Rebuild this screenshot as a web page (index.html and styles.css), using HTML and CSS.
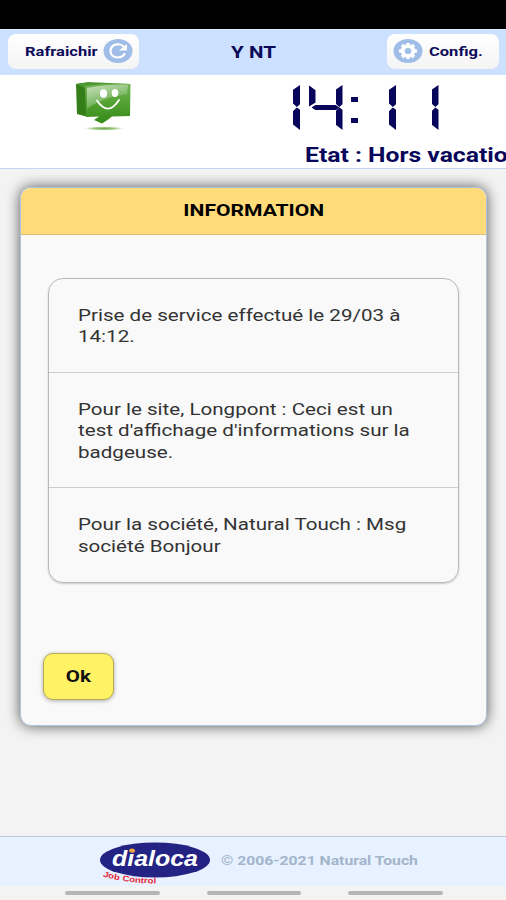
FILE: index.html
```html
<!DOCTYPE html>
<html lang="fr">
<head>
<meta charset="utf-8">
<title>Badgeuse</title>
<link rel="stylesheet" href="styles.css">
</head>
<body>
<div class="screen">
  <div class="statusbar"></div>
  <header class="topbar">
    <button class="tool tool-refresh"><span class="wide">Rafraichir</span>
      <svg width="30" height="26" viewBox="0 0 30 26"><ellipse cx="15" cy="13" rx="14.5" ry="12" fill="#9fbde6"/><path d="M21 8.800C19 6.800 16.800 6 14.200 6.300 9.800 6.800 7.500 9.500 7.500 13c0 3.800 3 6.500 7.200 6.500 3.600 0 6-1.700 7.200-4.200" fill="none" stroke="#fff" stroke-width="2.200"/><path d="M24 6v6.500h-8z" fill="#fff"/></svg>
    </button>
    <h1 class="title"><span class="wide">Y NT</span></h1>
    <button class="tool tool-config">
      <svg width="30" height="26" viewBox="0 0 30 26"><ellipse cx="15" cy="13" rx="14.500" ry="12" fill="#9fbde6"/><g fill="#fff"><ellipse cx="15" cy="13" rx="7.300" ry="6.200"/><rect x="13" y="5" width="4" height="16" rx="1"/><rect x="6" y="11.300" width="18" height="3.400" rx="1"/><rect x="13" y="4.500" width="4" height="17" rx="1" transform="rotate(45 15 13)"/><rect x="13" y="4.500" width="4" height="17" rx="1" transform="rotate(-45 15 13)"/></g><ellipse cx="15" cy="13" rx="3.400" ry="2.900" fill="#9fbde6"/></svg>
      <span class="wide">Config.</span>
    </button>
  </header>
  <section class="status">
    <svg class="smiley" width="60" height="52" viewBox="0 0 60 52">
      <defs>
        <linearGradient id="face" x1="0" y1="0" x2="0" y2="1"><stop offset="0" stop-color="#75b45a"/><stop offset=".45" stop-color="#55a335"/><stop offset="1" stop-color="#348a18"/></linearGradient>
        <linearGradient id="shine" x1="0" y1="0" x2=".7" y2="1"><stop offset="0" stop-color="#fff" stop-opacity=".6"/><stop offset="1" stop-color="#fff" stop-opacity="0"/></linearGradient>
        <radialGradient id="ground"><stop offset="0" stop-color="#6fa84d"/><stop offset=".55" stop-color="#a9cf91"/><stop offset="1" stop-color="#fff" stop-opacity="0"/></radialGradient>
      </defs>
      <ellipse cx="29" cy="48.500" rx="22" ry="2.300" fill="url(#ground)"/>
      <path d="M1 4 10 3 13 37 2 34z" fill="#347e19"/>
      <path d="M1 4 13 2 55 4 10 8z" fill="#4d9732"/>
      <path d="M10 6Q34 3 55.500 4L55 36 37 36.500Q33 40 27 43.500L19 40 24 36.500 11 37z" fill="url(#face)"/>
      <path d="M12 8Q34 4 53 5L52 14Q28 17 12 29z" fill="url(#shine)"/>
      <ellipse cx="28.500" cy="13.500" rx="3.600" ry="4.300" fill="#fff"/><ellipse cx="40" cy="13" rx="3.300" ry="4" fill="#fff"/>
      <path d="M22 20.500Q33 37 44 20" fill="none" stroke="#fff" stroke-width="1.800" stroke-linecap="round"/>
    </svg>
    <div class="readout">
      <div class="clock" role="img" aria-label="14:11">
        <div class="digit"><i class="seg top-right"></i><i class="seg low-right"></i></div>
        <div class="digit"><i class="seg top-left"></i><i class="seg middle"></i><i class="seg top-right"></i><i class="seg low-right"></i></div>
        <div class="colon"><i></i><i></i></div>
        <div class="digit"><i class="seg top-right"></i><i class="seg low-right"></i></div>
        <div class="digit"><i class="seg top-right"></i><i class="seg low-right"></i></div>
      </div>
      <p class="state"><span class="wide">Etat : Hors vacation</span></p>
    </div>
  </section>
  <main>
    <section class="card">
      <h2><span class="wide">INFORMATION</span></h2>
      <div class="card-body">
        <ul class="messages">
          <li><span class="wide">Prise de service effectué le 29/03 à<br>14:12.</span></li>
          <li><span class="wide">Pour le site, Longpont : Ceci est un<br>test d'affichage d'informations sur la<br>badgeuse.</span></li>
          <li><span class="wide">Pour la société, Natural Touch : Msg<br>société Bonjour</span></li>
        </ul>
        <button class="ok"><span class="wide">Ok</span></button>
      </div>
    </section>
  </main>
  <footer>
    <svg class="logo" width="112" height="46" viewBox="0 0 112 46">
      <ellipse cx="56" cy="19" rx="55" ry="17.500" fill="#232383"/>
      <text x="13" y="25" class="brand" textLength="86" lengthAdjust="spacingAndGlyphs">dialoca</text>
      <ellipse cx="33" cy="9.500" rx="2.800" ry="2" fill="#f0a43a"/>
      <path id="swoosh" d="M4 35.500Q28 42.500 59 42.500" fill="none"/>
      <text class="tagline"><textPath href="#swoosh" textLength="54" lengthAdjust="spacingAndGlyphs">Job Control</textPath></text>
    </svg>
    <span class="wide copyright">© 2006-2021 Natural Touch</span>
  </footer>
  <div class="navbar"><i></i><i></i><i></i></div>
</div>
</body>
</html>
```

FILE: styles.css
```css
* { box-sizing: border-box; }
body { margin: 0; font-family: Roboto, "Liberation Sans", sans-serif; background: #f3f3f3; }
h1, h2, p, ul { margin: 0; padding: 0; }
.screen { width: 506px; height: 900px; overflow: hidden; display: flex; flex-direction: column; }
.wide { display: inline-block; transform: scaleX(1.21); transform-origin: left center; white-space: nowrap; }
.statusbar { height: 29px; background: #000; flex: none; }
.topbar { height: 46px; flex: none; background: #cce0ff; border-top: 1px solid #dbe8fd; display: grid; grid-template-columns: 131px 1fr 112px; align-items: center; padding: 0 7px 3px 8px; color: #0c0a58; }
.tool { height: 35px; border: 0; border-radius: 8px; background: linear-gradient(#fff, #f4f4f4); display: flex; align-items: center; font: bold 13px Roboto, sans-serif; color: #0c0a58; padding: 0; }
.tool .wide { transform: scaleX(1.27); }
.tool-refresh { justify-content: space-between; padding: 0 6px 0 17px; }
.tool-config { gap: 6px; padding-left: 6px; }
.title { font-size: 17px; line-height: 20px; text-align: center; padding: 1px 18px 0 0; }
.title .wide { transform-origin: center; }
.status { height: 94px; flex: none; background: #fff; border-bottom: 1px solid #c3d5ee; display: flex; padding-left: 75px; }
.smiley { margin-top: 5px; flex: none; }
.readout { padding: 10px 0 0 131px; }
.clock { display: flex; gap: 8.500px; height: 46px; }
.digit { width: 34px; height: 45px; display: grid; grid-template-columns: 7px 20px 7px; grid-template-rows: 22px 23px; flex: none; }
.seg { background: #08065a; }
.top-right { grid-column: 3; grid-row: 1; clip-path: polygon(100% 0, 100% 87%, 55% 100%, 0 84%, 0 22%); }
.low-right { grid-column: 3; grid-row: 2; clip-path: polygon(55% 2%, 100% 12%, 100% 100%, 0 76%, 0 18%); }
.top-left { grid-column: 1; grid-row: 1; clip-path: polygon(0 0, 100% 24%, 100% 80%, 8% 98%, 0 98%); }
.middle { grid-column: 1 / 4; grid-row: 1 / 3; align-self: start; height: 5px; margin: 20px 3px 0 3px; clip-path: polygon(0 50%, 14% 0, 86% 0, 100% 50%, 88% 100%, 14% 100%); }
.colon { width: 7px; margin-right: -4.500px; display: flex; flex-direction: column; gap: 16px; padding-top: 12px; flex: none; }
.colon i { height: 5px; background: #08065a; }
.state { margin-top: 10px; padding-left: 39px; font-size: 20px; line-height: 28px; font-weight: bold; color: #08065a; }
.state .wide { transform: scaleX(1.235); }
main { flex: 1; padding: 18px 19px 0 20px; }
.card { height: 539px; border: 1px solid #adc5df; border-radius: 11px; background: #f9f9f9; box-shadow: 0 0 14px rgba(0,0,0,.65); overflow: hidden; }
.card h2 { height: 47px; background: #ffdc79; border-bottom: 1px solid #d8bd73; text-align: center; font-size: 17px; line-height: 45px; color: #000; }
.card h2 .wide { transform: scaleX(1.24); transform-origin: center; }
.card-body { padding: 43px 27px 0 27px; }
.messages { list-style: none; border: 1px solid #b9b9b9; border-radius: 15px; box-shadow: 0 1px 2px rgba(0,0,0,.2); font-size: 17px; line-height: 21.300px; color: #333; }
.messages li { padding: 26px 29px 24.500px; }
.messages li .wide { display: block; }
.messages li + li { border-top: 1px solid #cdcdcd; }
.ok { display: block; width: 71px; height: 47px; margin: 70px 0 0 -5px; border: 1px solid #b5aa55; border-radius: 10px; background: #fff265; box-shadow: 0 1px 4px rgba(0,0,0,.3); font: bold 17px Roboto, sans-serif; color: #111; padding: 0; }
.ok .wide { transform-origin: center; }
footer { height: 50px; flex: none; background: #e8f1ff; border-top: 1px solid #bccae0; display: flex; padding-left: 99px; }
.logo { margin-top: 4px; flex: none; }
.brand { font: italic bold 22px "Liberation Sans", sans-serif; fill: #fff; }
.tagline { font: bold 8px "Liberation Sans", sans-serif; fill: #e3263a; }
.copyright { font-size: 13.500px; font-weight: bold; line-height: 47px; color: #a2b5cb; margin-left: 10px; transform: scaleX(1.165); }
.navbar { height: 14px; flex: none; display: flex; gap: 47px; padding: 5px 0 0 65px; }
.navbar i { width: 94.500px; height: 4px; border-radius: 2px; background: #b5b5b5; }
```
